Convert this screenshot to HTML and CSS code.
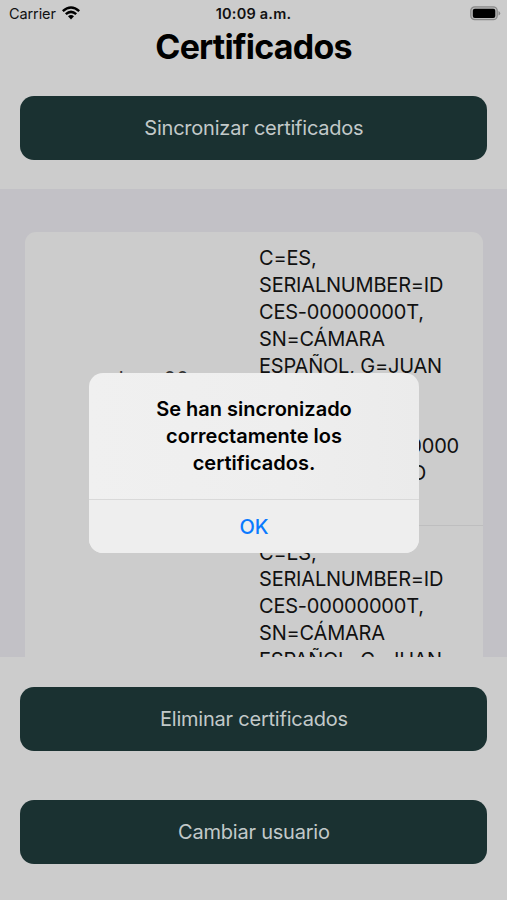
FILE: index.html
```html
<!DOCTYPE html>
<html lang="es">
<head>
<meta charset="utf-8">
<title>Certificados</title>
<link rel="stylesheet" href="styles.css">
</head>
<body>
<div class="screen">
  <header class="status">
    <div class="carrier"><span>Carrier</span>
      <svg class="wifi" width="18" height="14" viewBox="0 0 18 14"><g fill="none" stroke="#000" stroke-width="2.5"><path d="M.8 5.1Q9-2 17.2 5.1"/><path d="M3.8 8.1Q9 3.6 14.2 8.1"/></g><path d="M6 10.2Q9 7.7 12 10.2L9 13.4Z"/></svg>
    </div>
    <span class="clock">10:09 a.m.</span>
    <svg class="battery" width="31" height="15" viewBox="0 0 31 15"><rect x=".8" y=".8" width="26.4" height="12.9" rx="4" fill="#bbb" stroke="#898989" stroke-width="1.3"/><rect x="2.8" y="2.7" width="22.5" height="9.2" rx="2"/><path d="M28.5 5Q30.2 5.7 30.2 7.3T28.5 9.6Z" fill="#898989"/></svg>
  </header>
  <h1 class="title">Certificados</h1>
  <button class="action sync">Sincronizar certificados</button>
  <main class="list">
    <div class="card">
      <div class="row">
        <div class="alias">enlace 00</div>
        <div class="subject">
          <div>C=ES,</div><div>SERIALNUMBER=ID</div><div>CES-00000000T,</div><div>SN=CÁMARA</div><div>ESPAÑOL, G=JUAN</div><div></div><div></div><div class="line-id">00000</div><div class="line-name">O</div>
        </div>
      </div>
      <div class="row">
        <div class="alias"></div>
        <div class="subject">
          <div>C=ES,</div><div>SERIALNUMBER=ID</div><div>CES-00000000T,</div><div>SN=CÁMARA</div><div>ESPAÑOL, G=JUAN</div>
        </div>
      </div>
    </div>
  </main>
  <footer class="footer">
    <button class="action">Eliminar certificados</button>
    <button class="action">Cambiar usuario</button>
  </footer>
  <div class="dialog" role="alertdialog">
    <div class="message"><div>Se han sincronizado</div><div>correctamente los</div><div>certificados.</div></div>
    <button class="ok">OK</button>
  </div>
</div>
</body>
</html>
```

FILE: styles.css
```css
* { box-sizing: border-box; }
body { margin: 0; font-family: Inter, "Liberation Sans", sans-serif; color: #111; }
button { border: 0; font: inherit; padding: 0; }
.screen { position: relative; width: 507px; height: 900px; overflow: hidden; background: #ccc; display: flex; flex-direction: column; }
.status { height: 27px; flex: none; display: grid; grid-template-columns: 1fr auto 1fr; align-items: center; padding: 0 6px 0 9px; font-size: 14.5px; }
.carrier { display: flex; align-items: center; gap: 6px; letter-spacing: -.1px; }
.wifi { margin-top: -1px; }
.clock { font-weight: 600; letter-spacing: .2px; margin-left: -3px; }
.battery { justify-self: end; }
.title { flex: none; margin: 0; height: 40px; line-height: 39px; text-align: center; font-size: 34px; font-weight: 700; letter-spacing: -.8px; color: #000; }
.action { display: block; flex: none; width: 467px; height: 64px; margin-left: 20.4px; border-radius: 14px; background: #1a3131; color: #c2c9c9; font-size: 20px; letter-spacing: -.22px; }
.sync { margin-top: 29px; }
.list { flex: none; margin-top: 29px; height: 468px; padding: 43px 24px 0 25px; background: #c2c1c6; overflow: hidden; }
.card { background: #ccc; border-radius: 11px; }
.row { display: grid; grid-template-columns: 234px 1fr; height: 292.5px; font-size: 20px; }
.row + .row .subject { border-top: 1px solid #bebebf; padding-top: 14px; }
.alias { align-self: center; text-align: center; padding-top: 2px; color: #333; }
.subject { padding-top: 13px; line-height: 26.9px; letter-spacing: -.2px; white-space: nowrap; }
.subject div { height: 26.9px; }
.line-id { width: 200px; text-align: right; }
.line-name { width: 167px; text-align: right; }
.footer { display: flex; flex-direction: column; gap: 49px; padding-top: 29.5px; }
.dialog { position: absolute; left: 89px; top: 373px; width: 330px; height: 180px; border-radius: 14px; background: linear-gradient(90deg, #f0f0f0, #eee 60%, #ebebeb); display: flex; flex-direction: column; overflow: hidden; }
.message { height: 127px; padding-top: 23px; border-bottom: 1px solid #d9d9d9; text-align: center; font-size: 20px; font-weight: 600; line-height: 27px; color: #000; }
.ok { flex: 1; background: #eee; color: #0a7aff; font-size: 20px; font-weight: 500; }
```
